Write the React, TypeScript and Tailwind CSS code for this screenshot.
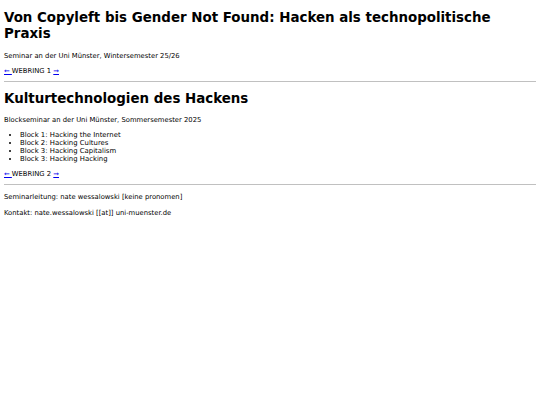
import React from 'react';

const Webring: React.FC<{ n: number }> = ({ n }) => (
  <p className="text-[6.8px] leading-[9px] my-[5px]">
    <a href="#" className="text-[#0000ee] underline whitespace-pre">{'← '}</a>WEBRING {n}{' '}
    <a href="#" className="text-[#0000ee] underline">→</a>
  </p>
);

export default function App() {
  const blocks = [
    'Block 1: Hacking the Internet',
    'Block 2: Hacking Cultures',
    'Block 3: Hacking Capitalism',
    'Block 3: Hacking Hacking',
  ];

  return (
    <div className="bg-white text-black min-h-[405px] px-[4px] py-[1px] font-['DejaVu_Sans',sans-serif]">
      {/* Wintersemester */}
      <h1 className="text-[13.4px] font-bold leading-[16px] mt-[9px] mb-[10px]">
        Von Copyleft bis Gender Not Found: Hacken als technopolitische Praxis
      </h1>
      <p className="text-[6.8px] leading-[9px] my-[6px]">
        Seminar an der Uni Münster, Wintersemester 25/26
      </p>
      <Webring n={1} />
      <hr className="border-0 border-t border-[#c0c0c0] mt-[5px] mb-[9px]" />

      {/* Sommersemester */}
      <h2 className="text-[13.4px] font-bold leading-[16px] mt-[9px] mb-[9px]">
        Kulturtechnologien des Hackens
      </h2>
      <p className="text-[6.8px] leading-[9px] my-[6px]">
        Blockseminar an der Uni Münster, Sommersemester 2025
      </p>
      <ul className="list-disc pl-[16px] text-[6.9px] leading-[8px] mt-[6px] mb-[7px]">
        {blocks.map((b, i) => (
          <li key={i}>{b}</li>
        ))}
      </ul>
      <Webring n={2} />
      <hr className="border-0 border-t border-[#c0c0c0] mt-[5px] mb-[8px]" />

      <p className="text-[6.8px] leading-[9px] mt-[8px] mb-[7px]">
        Seminarleitung: nate wessalowski [keine pronomen]
      </p>
      <p className="text-[6.8px] leading-[9px] my-[7px]">
        Kontakt: nate.wessalowski [[at]] uni-muenster.de
      </p>
    </div>
  );
}
